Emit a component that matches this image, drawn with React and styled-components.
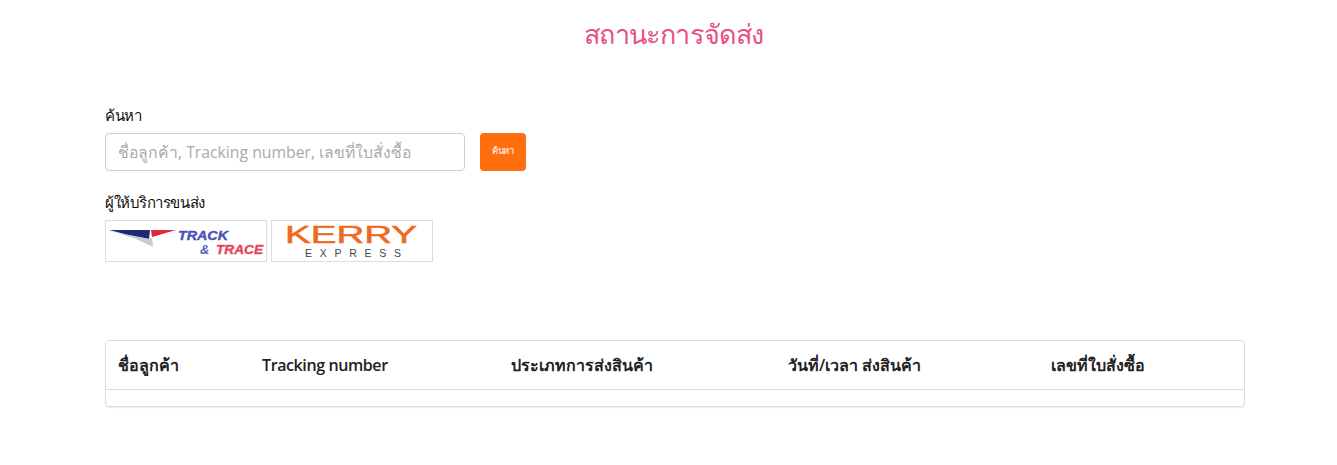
import React from 'react';
import styled, { createGlobalStyle } from 'styled-components';

const GlobalStyle = createGlobalStyle`
  * { box-sizing: border-box; }
  body {
    margin: 0;
    background: #fff;
    color: #111;
    font-family: "Open Sans", "Noto Sans", sans-serif;
  }
`;

const Page = styled.div`
  width: 1337px;
  height: 465px;
  padding: 0 92px 0 105px;
  overflow: hidden;
`;

const Title = styled.h1`
  margin: 0;
  padding: 14px 2px 0 0;
  height: 104px;
  text-align: center;
  font-size: 27px;
  line-height: 40px;
  font-weight: 400;
  letter-spacing: -0.8px;
  color: #e5527f;
`;

const Label = styled.div`
  font-size: 15px;
  line-height: 22px;
  letter-spacing: -0.45px;
  color: #111;
`;

const SearchRow = styled.div`
  display: flex;
  gap: 15px;
  margin-top: 7px;
  margin-bottom: 20px;
`;

const SearchInput = styled.input`
  width: 360px;
  height: 38px;
  padding: 0 12px;
  border: 1px solid #ccc;
  border-radius: 4px;
  font: 400 15.75px "Open Sans", "Noto Sans", sans-serif;
  &::placeholder { color: #aaa; opacity: 1; }
`;

const SearchButton = styled.button`
  width: 46px;
  height: 38px;
  padding: 0 0 3px;
  border: 0;
  border-radius: 4px;
  background: #ff6f0d;
  color: #fff;
  font: 400 9.5px "Open Sans", "Noto Sans", sans-serif;
  letter-spacing: -0.2px;
`;

const Logos = styled.div`
  display: flex;
  gap: 4px;
  margin-top: 7px;
  margin-bottom: 78px;
`;

const LogoBox = styled.a`
  display: block;
  width: 162px;
  height: 42px;
  border: 1px solid #ddd;
  svg { display: block; }
`;

const Card = styled.div`
  border: 1px solid #ddd;
  border-radius: 4px;
  box-shadow: 0 1px 1px rgba(0,0,0,.08);
  height: 67px;
`;

const HeadRow = styled.div`
  display: grid;
  grid-template-columns: 144px 249px 277px 263px 1fr;
  height: 49px;
  padding-left: 12px;
  align-items: center;
  border-bottom: 1px solid #ddd;
`;

const HeadCell = styled.div`
  font-size: 16px;
  font-weight: 600;
  letter-spacing: ${p => (p.$tight ? '-0.4px' : '0')};
  color: #222;
`;

const heads = [
  { text: 'ชื่อลูกค้า' },
  { text: 'Tracking number', tight: true },
  { text: 'ประเภทการส่งสินค้า' },
  { text: 'วันที่/เวลา ส่งสินค้า' },
  { text: 'เลขที่ใบสั่งซื้อ' },
];

const TrackLogo = () => (
  <svg width="160" height="40" viewBox="0 0 160 40">
    <polygon points="3,9 44,9 43,18 20,13.5" fill="#1d2a78" />
    <polygon points="3,9 20,13.5 43,18 46,17 47,26 30,18" fill="#c9ccd4" />
    <polygon points="45,9 70,9 46,16" fill="#d9283c" />
    <g fontFamily="'Liberation Sans', sans-serif" fontWeight="700" fontStyle="italic">
      <text x="72" y="19" fontSize="13" fill="#4b50b8" stroke="#4b50b8" strokeWidth="0.4" textLength="50" lengthAdjust="spacingAndGlyphs">TRACK</text>
      <text x="94" y="33" fontSize="13" fill="#5a62c4">&amp;</text>
      <text x="110" y="33" fontSize="13" fill="#e8435c" stroke="#e8435c" strokeWidth="0.4" textLength="47" lengthAdjust="spacingAndGlyphs">TRACE</text>
    </g>
  </svg>
);

const KerryLogo = () => (
  <svg width="160" height="40" viewBox="0 0 160 40">
    <g fontFamily="'Liberation Sans', sans-serif">
      <text x="13" y="22" fontSize="23" fill="#ee6a1f" stroke="#ee6a1f" strokeWidth="0.5" textLength="132" lengthAdjust="spacingAndGlyphs">KERRY</text>
      <text x="33" y="36" fontSize="10.5" fill="#444" textLength="96" lengthAdjust="spacing">EXPRESS</text>
    </g>
  </svg>
);

export default function App() {
  return (
    <Page>
      <GlobalStyle />
      <Title>สถานะการจัดส่ง</Title>
      <Label>ค้นหา</Label>
      <SearchRow>
        <SearchInput placeholder="ชื่อลูกค้า, Tracking number, เลขที่ใบสั่งซื้อ" />
        <SearchButton>ค้นหา</SearchButton>
      </SearchRow>
      <Label>ผู้ให้บริการขนส่ง</Label>
      <Logos>
        <LogoBox><TrackLogo /></LogoBox>
        <LogoBox><KerryLogo /></LogoBox>
      </Logos>
      <Card>
        <HeadRow>
          {heads.map(h => <HeadCell key={h.text} $tight={h.tight}>{h.text}</HeadCell>)}
        </HeadRow>
      </Card>
    </Page>
  );
}
